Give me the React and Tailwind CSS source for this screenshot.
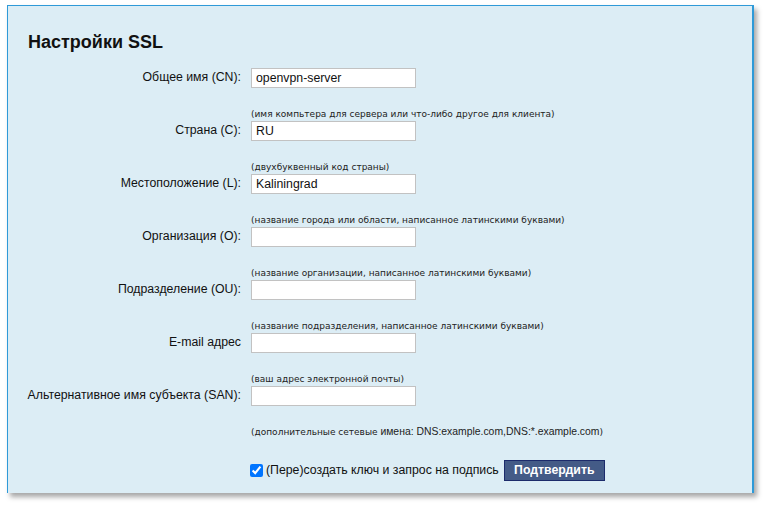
import React from 'react';

const fields = [
  { label: 'Общее имя (CN):', value: 'openvpn-server', hint: '(имя компьтера для сервера или что-либо другое для клиента)' },
  { label: 'Страна (C):', value: 'RU', hint: '(двухбуквенный код страны)' },
  { label: 'Местоположение (L):', value: 'Kaliningrad', hint: '(название города или области, написанное латинскими буквами)' },
  { label: 'Организация (O):', value: '', hint: '(название организации, написанное латинскими буквами)' },
  { label: 'Подразделение (OU):', value: '', hint: '(название подразделения, написанное латинскими буквами)' },
  { label: 'E-mail адрес', value: '', hint: '(ваш адрес электронной почты)' },
  { label: 'Альтернативное имя субъекта (SAN):', value: '', hint: null },
];

const sans = "font-['Liberation_Sans',Arial,sans-serif]";
const hintFont = "font-['DejaVu_Sans',sans-serif]";

const Field = ({ label, value, hint }) => (
  <div className="grid grid-cols-[233px_165px] gap-x-[10px] h-[53px]">
    <label className="text-right text-[12.3px] leading-4 pt-[1px] text-[#111]">{label}</label>
    <input
      type="text"
      defaultValue={value}
      className="h-[20px] w-[165px] bg-white border border-[#c2c2c2] px-[4px] text-[12.3px] text-[#111] outline-none"
    />
    <div />
    <div className={`${hintFont} col-start-2 mt-[18px] text-[9px] leading-3 text-[#222] whitespace-nowrap`}>
      {hint || (
        <>
          (дополнительные сетевые <span className={`${sans} text-[10.4px]`}>имена: DNS:example.com,DNS:*.example.com</span>)
        </>
      )}
    </div>
  </div>
);

export default function App() {
  return (
    <div className={`${sans} w-[766px] h-[507px] bg-white pt-[5px] pl-[7px]`}>
      <div className="w-[747px] h-[488px] bg-[#dcedf5] border-t border-l border-r-2 border-[#2f9ad8] shadow-[3px_4px_5px_rgba(0,0,0,0.35)]">
        <h1 className="pl-[20px] pt-[25px] text-[18px] leading-[22px] font-bold text-[#111]">Настройки SSL</h1>
        <div className="mt-[15px]">
          {fields.map((f) => (
            <Field key={f.label} {...f} />
          ))}
        </div>
        <div className="mt-[21px] ml-[242px] flex items-center gap-[3px]">
          <input type="checkbox" defaultChecked className="w-[13px] h-[13px] m-0 accent-[#0075ff]" />
          <span className="text-[12.3px] text-[#111]">(Пере)создать ключ и запрос на подпись</span>
          <button className="ml-[2px] h-[21px] w-[101px] bg-[#445b87] border border-[#1c2b6b] text-white text-[12.3px] font-bold leading-none">
            Подтвердить
          </button>
        </div>
      </div>
    </div>
  );
}
